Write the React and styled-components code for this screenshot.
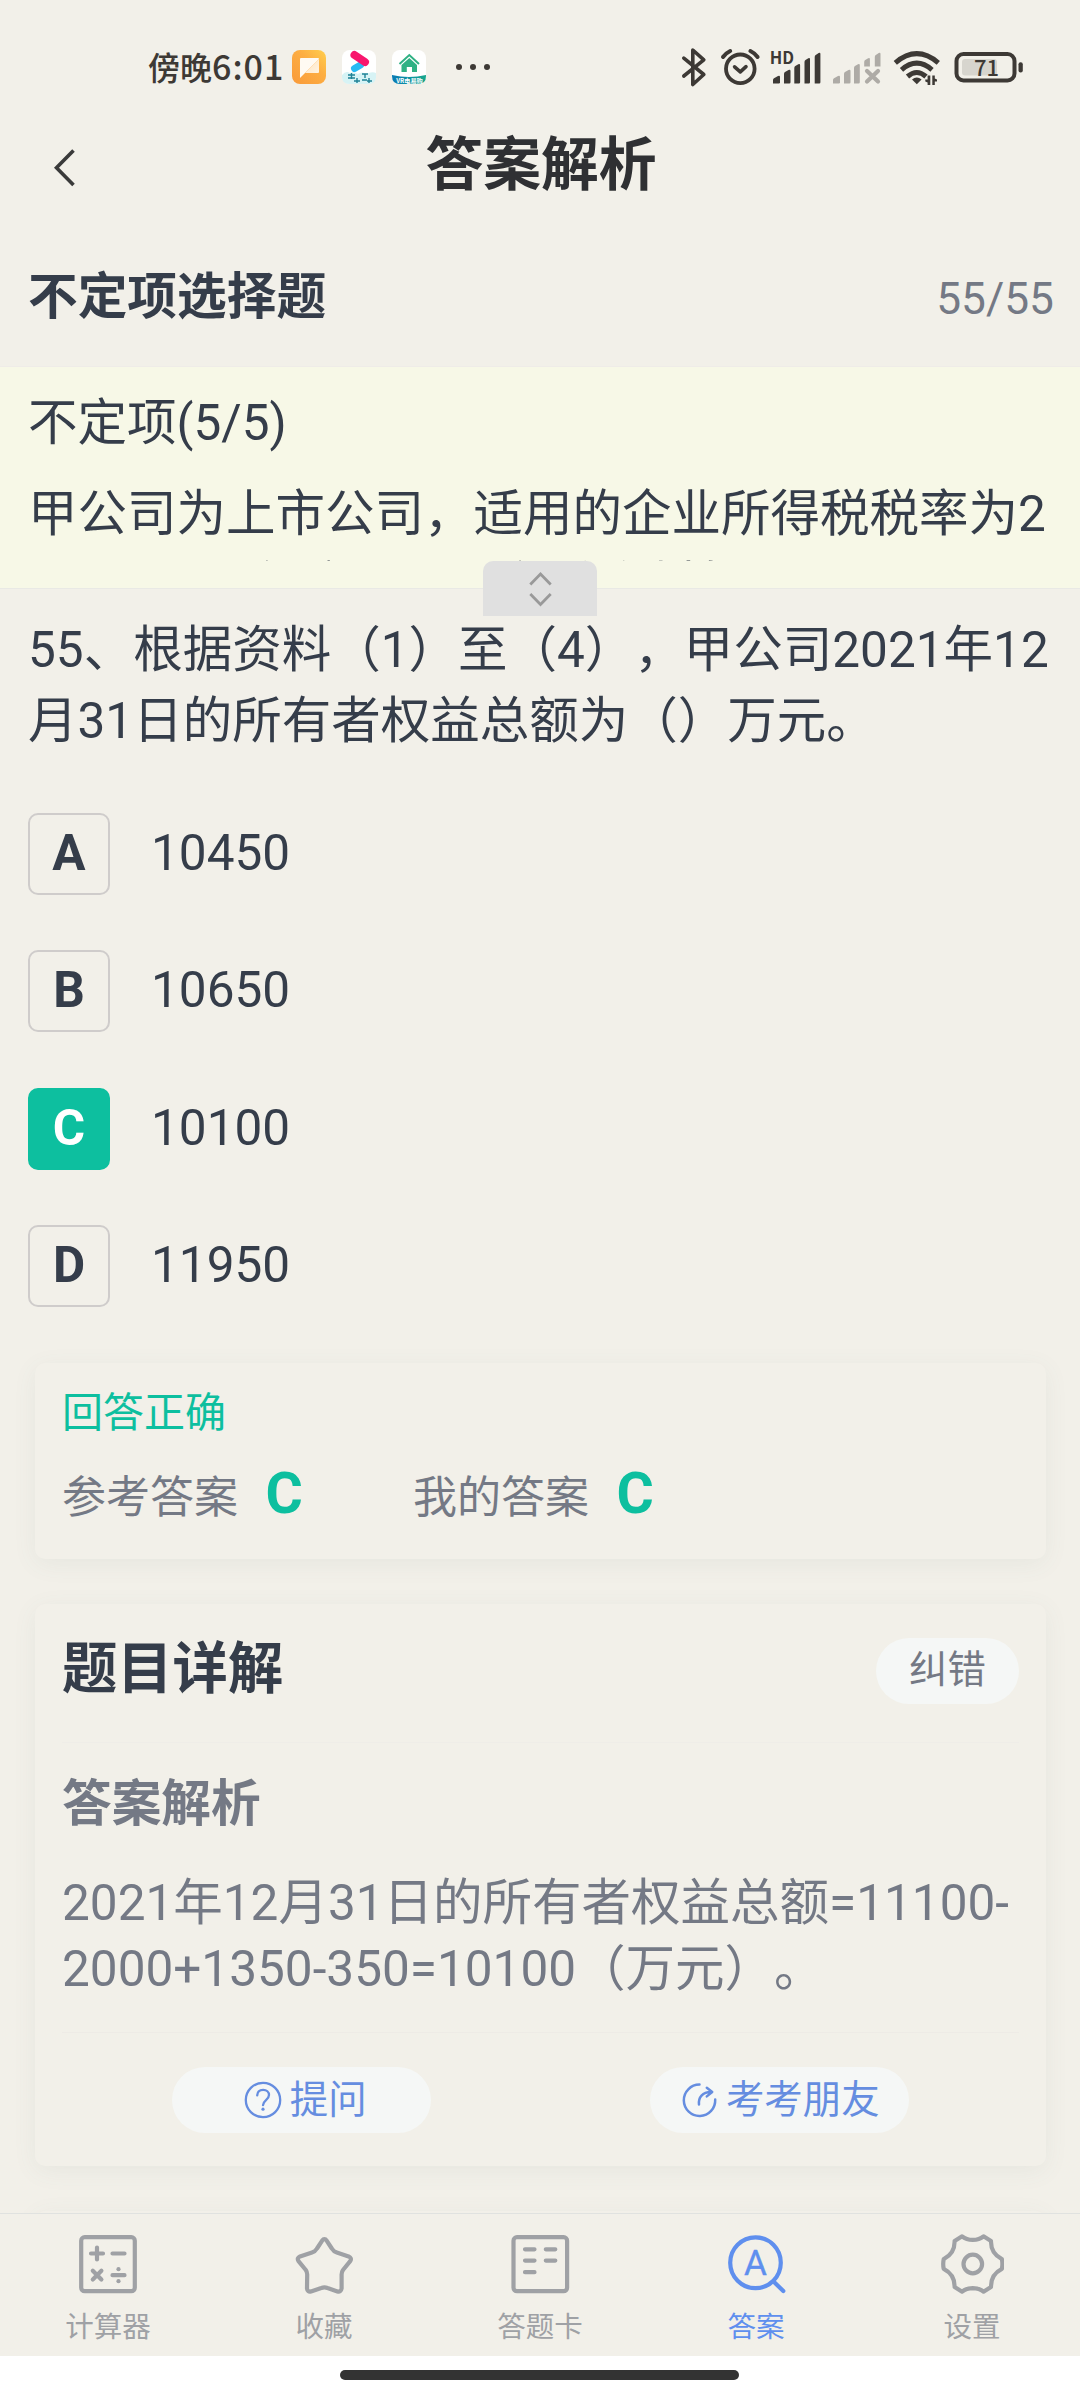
import React from "react";
import styled, { createGlobalStyle } from "styled-components";

const color = {
  page: "#f2f0e9",
  material: "#f7f8e7",
  ink: "#353d4a",
  title: "#2f3033",
  muted: "#747985",
  green: "#0dbf9f",
  blue: "#5f8fee",
  linkBlue: "#658de0",
  nav: "#9fa1a5",
  pill: "#f5f7f6",
  status: "#3d3935",
};

const Global = createGlobalStyle`
  * { box-sizing: border-box; }
  body {
    margin: 0;
    background: #fff;
    font-family: Roboto, "Noto Sans CJK SC", sans-serif;
    text-spacing-trim: space-all;
  }
`;

const Screen = styled.div`
  width: 1080px;
  height: 2400px;
  display: flex;
  flex-direction: column;
  background: ${color.page};
  color: ${color.ink};
  overflow: hidden;
`;

/* ---------- status bar ---------- */

const StatusBar = styled.div`
  flex: none;
  height: 110px;
  padding: 24px 0 0 148px;
  display: flex;
  align-items: center;
`;

const Clock = styled.div`
  flex: none;
  width: 144px;
  margin-top: -3px;
  font: 500 32px/40px "Noto Sans CJK SC", sans-serif;
  color: ${color.status};
  white-space: nowrap;
  span {
    font-size: 34px;
    letter-spacing: 1px;
  }
`;

const AppIcons = styled.div`
  flex: none;
  display: flex;
  gap: 16px;
`;

const Dots = styled.div`
  flex: none;
  display: flex;
  gap: 8px;
  margin-left: 30px;
  i {
    width: 6px;
    height: 6px;
    border-radius: 50%;
    background: ${color.status};
  }
`;

const StatusRight = styled.svg`
  flex: none;
  display: block;
  margin: -3px 0 0 190.5px;
`;

/* ---------- header ---------- */

const Header = styled.header`
  flex: none;
  height: 122px;
  padding: 15px 48px 0;
  display: grid;
  grid-template-columns: 60px 1fr 58px;
  align-items: start;
`;

const BackButton = styled.button`
  border: 0;
  padding: 23px 0 0 4px;
  background: none;
  text-align: left;
  line-height: 0;
`;

const HeaderTitle = styled.h1`
  margin: 0;
  font-size: 57.8px;
  line-height: 80px;
  font-weight: 700;
  text-align: center;
  color: ${color.title};
`;

const SectionRow = styled.div`
  flex: none;
  height: 135px;
  padding: 30px 26px 0 28px;
  display: flex;
  align-items: baseline;
  justify-content: space-between;
  border-bottom: 1px solid #efece8;
`;

const SectionTitle = styled.h2`
  margin: 0;
  font-size: 49.7px;
  line-height: 71px;
  font-weight: 700;
`;

const Progress = styled.span`
  font-size: 44.3px;
  line-height: 71px;
  color: ${color.muted};
`;

/* ---------- shared material ---------- */

const Material = styled.section`
  flex: none;
  position: relative;
  height: 222px;
  padding: 20.5px 0 0 28px;
  background: ${color.material};
  border-bottom: 1px solid #e9e9e5;
`;

const Paragraph = styled.p`
  margin: 0;
  font-size: 49.5px;
  line-height: ${(p) => p.$line || 71}px;
  color: ${(p) => (p.$muted ? color.muted : color.ink)};
  white-space: nowrap;
`;

const MaterialText = styled.div`
  margin-top: 20px;
  height: 82.5px;
  overflow: hidden;
  display: flex;
  flex-direction: column;
  gap: 1.5px;
  p {
    flex: none;
  }
`;

const Handle = styled.div`
  position: absolute;
  left: 483px;
  top: 194px;
  width: 114px;
  height: 55px;
  padding-top: 1px;
  border-radius: 10px 10px 0 0;
  background: #e0e0e0;
  display: flex;
  align-items: center;
  justify-content: center;
`;

/* ---------- question ---------- */

const Question = styled.section`
  flex: none;
  padding: 25.5px 0 0 28px;
`;

const Options = styled.ul`
  flex: none;
  list-style: none;
  margin: 56.5px 0 0;
  padding: 0 28px;
  display: flex;
  flex-direction: column;
  gap: 55.4px;
`;

const Option = styled.li`
  display: flex;
  align-items: center;
  gap: 41px;
  height: 82px;
  font-size: 49.5px;
  line-height: 76px;
`;

const OptionKey = styled.span`
  width: 82px;
  height: 82px;
  padding-bottom: 2px;
  display: flex;
  align-items: center;
  justify-content: center;
  border: 2px solid ${(p) => (p.$on ? color.green : "#cfcccb")};
  border-radius: 10px;
  background: ${(p) => (p.$on ? color.green : "transparent")};
  color: ${(p) => (p.$on ? "#fff" : color.ink)};
  font-weight: 700;
`;

const OptionText = styled.span`
  padding-bottom: 2px;
`;

/* ---------- cards ---------- */

const Card = styled.section`
  flex: none;
  width: 1011px;
  height: ${(p) => p.$height}px;
  margin: ${(p) => p.$top}px 0 0 35px;
  padding: ${(p) => p.$pad}px 27px 0;
  border-radius: 10px;
  background: ${color.page};
  box-shadow: 0 5px 24px rgba(80, 110, 120, 0.07);
`;

const Verdict = styled.div`
  font-size: 41px;
  line-height: 50px;
  color: ${color.green};
`;

const Answers = styled.div`
  display: flex;
  margin-top: 26px;
`;

const Answer = styled.div`
  width: 351px;
  display: flex;
  align-items: baseline;
  gap: 27.5px;
  font-size: 44px;
  line-height: 60px;
  color: ${color.muted};
  b {
    font-size: 57px;
    color: ${color.green};
  }
`;

const CardHead = styled.div`
  height: 105px;
  display: flex;
  align-items: flex-start;
  justify-content: space-between;
  border-bottom: 1px solid #efede8;
`;

const CardTitle = styled.h3`
  margin: -1.3px 0 0;
  font-size: 55.3px;
  line-height: 66px;
  font-weight: 700;
`;

const Pill = styled.button`
  width: ${(p) => p.$width}px;
  height: 66px;
  padding: 0 0 ${(p) => (p.$link ? 0 : 2)}px ${(p) => p.$inset || 0}px;
  border: 0;
  border-radius: 33px;
  background: ${color.pill};
  color: ${(p) => (p.$link ? color.linkBlue : color.muted)};
  font: 400 38.4px/60px Roboto, "Noto Sans CJK SC", sans-serif;
  display: flex;
  align-items: center;
  justify-content: center;
  gap: 8px;
`;

const SubTitle = styled.h4`
  margin: 27.5px 0 33.5px;
  font-size: 49.7px;
  line-height: 66px;
  font-weight: 700;
  color: ${color.muted};
`;

const Actions = styled.div`
  margin-top: 30px;
  padding-top: 34px;
  border-top: 1px solid #eeebe6;
  display: grid;
  grid-template-columns: 1fr 1fr;
  justify-items: center;
`;

const Content = styled.main`
  flex: none;
  height: 1846px;
  overflow: hidden;
  display: flex;
  flex-direction: column;
`;

/* ---------- bottom navigation ---------- */

const Nav = styled.nav`
  flex: none;
  height: 143px;
  border-top: 1px solid #e0e2e0;
  background: ${color.page};
  display: grid;
  grid-template-columns: repeat(5, 1fr);
`;

const NavItem = styled.a`
  padding-top: 18px;
  display: flex;
  flex-direction: column;
  align-items: center;
  gap: 15px;
  font-size: 28.5px;
  line-height: 34px;
  color: ${(p) => (p.$active ? color.blue : color.nav)};
`;

const HomeArea = styled.div`
  flex: 1;
  padding: 14px 1px 0 0;
  background: #fff;
`;

const HomeBar = styled.div`
  width: 399px;
  height: 10px;
  margin: 0 auto;
  border-radius: 5px;
  background: #333;
`;

const stroke = {
  fill: "none",
  stroke: "currentColor",
  strokeLinecap: "round",
  strokeLinejoin: "round",
};

const NavSvg = ({ children }) => (
  <svg width="64" height="64" viewBox="0 0 64 64" {...stroke} strokeWidth="4.2">
    {children}
  </svg>
);

const CalculatorIcon = () => (
  <NavSvg>
    <rect x="5.2" y="5.2" width="53.6" height="54" rx="3.5" />
    <path d="M15 21.5h12M21 15.5v12M36.5 21.5h12M16.8 38.8l8.6 8.6M25.4 38.8l-8.6 8.6M36.5 43.2h12" />
    <circle cx="42.5" cy="37.2" r="2.1" fill="currentColor" stroke="none" />
    <circle cx="42.5" cy="49.2" r="2.1" fill="currentColor" stroke="none" />
  </NavSvg>
);

const StarIcon = () => (
  <NavSvg>
    <path d="M30 8.800Q32.400 5.600 34.800 8.800L39.800 16.500Q41.600 19.500 44.800 20.500L56.600 24.400Q60.200 26 58.200 29.200L51 38Q49.600 40 49.600 42.500L49.600 56.500Q49 60.200 45.400 59.400L35.500 56Q32.400 54.800 29.300 56L19 59.400Q15.400 60.200 15 56.500L15.200 42.500Q15.200 40 13.800 38L6.500 29.200Q4.500 26 8 24.400L20 20.500Q23.200 19.500 25 16.500Z" />
  </NavSvg>
);

const SheetIcon = () => (
  <NavSvg>
    <rect x="5.500" y="5.2" width="53.6" height="54" rx="3.5" />
    <path d="M17 17.300h9.500M37.800 17.300h9.500M17 28.600h9.500M37.800 28.600h9.500M17 40.200h9.500" />
  </NavSvg>
);

const AnswerIcon = () => (
  <NavSvg>
    <ellipse cx="31.500" cy="30.800" rx="25.300" ry="25.400" />
    <path d="M49.500 49.500L59.300 59" />
    <text
      x="31.500"
      y="43.300"
      textAnchor="middle"
      fontFamily="Roboto, sans-serif"
      fontSize="35"
      fontWeight="400"
      fill="currentColor"
      stroke="currentColor"
      strokeWidth="0.4"
    >
      A
    </text>
  </NavSvg>
);

const GearIcon = () => (
  <NavSvg>
    <circle cx="32.800" cy="32" r="9.300" />
    <path d="M14.600 9L22.100 4.300Q26.300 7.800 32.800 7.900Q39.300 7.800 43.500 4.300L51 9Q50.600 21.500 61.900 27.200Q62.900 32 61.900 36.800Q50.600 42.500 51 55L43.500 59.700Q39.300 56.200 32.800 56.100Q26.300 56.200 22.100 59.700L14.600 55Q15 42.500 3.700 36.800Q2.700 32 3.700 27.200Q15 21.500 14.600 9Z" />
  </NavSvg>
);

const HelpIcon = () => (
  <svg width="38" height="38" viewBox="0 0 38 38" {...stroke} strokeWidth="2.3">
    <circle cx="19" cy="19" r="17.2" />
    <path d="M13.200 14.400c.2-3.600 2.500-5.500 5.900-5.500 3.500 0 5.900 2.100 5.900 5.100 0 4.900-6 5.200-6 10.200" />
    <circle cx="19" cy="28.200" r="1.600" fill="currentColor" stroke="none" />
  </svg>
);

const ShareIcon = () => (
  <svg width="38" height="38" viewBox="0 0 38 38" {...stroke} strokeWidth="2.5">
    <path d="M19.500 3.600A15.700 15.700 0 1 0 35.200 18.500" />
    <path d="M19 23.500c-.8-7 3.500-12.400 12-12.500M26.800 6.800l5.400 4.200-5.400 4.400" />
  </svg>
);

const StatusIcons = () => (
  <StatusRight width="364" height="52" viewBox="0 0 364 52">
    <g {...stroke} stroke={color.status} strokeWidth="3.6">
      <path d="M2.800 18.200L22.800 34.500L11.800 44.500V10L22.800 19.800L2.800 36" />
      <circle cx="59.300" cy="28.800" r="14.300" strokeWidth="3.800" />
      <path d="M53.600 26.800L59.300 31.800L65 26.600" />
      <path d="M42 17q3-4 7.200-6M76.600 17q-3-4-7.200-6" strokeWidth="4" />
    </g>
    <text
      x="88.800"
      y="24"
      fontFamily='"Noto Sans CJK SC", sans-serif'
      fontSize="16.500"
      fontWeight="700"
      fill={color.status}
    >
      HD
    </text>
    <g fill={color.status}>
      <path d="M92 43.500V40q0-1 1-1.700l4-2.300q2-.8 2 1V42.200q0 1.300-1.200 1.300Z" />
      <path d="M103 43.500V34q0-1.500 1-2l3.500-2q2-.8 2 1V42.200q0 1.300-1.200 1.300Z" />
      <path d="M113.300 43.500V28q0-1.500 1-2l3-1.800q1.800-.8 1.800 1V42.200q0 1.300-1.200 1.300Z" />
      <path d="M123.500 43.500V22q0-1.500 1-2l2.800-1.700q1.700-.8 1.700 1V42.200q0 1.300-1.200 1.300Z" />
      <path d="M133.700 43.500V17q0-1.500 1-2l3-2q1.700-.8 1.700 1V42.200q0 1.300-1.200 1.300Z" />
    </g>
    <g fill="#aeaba6">
      <path d="M152 43.500V40q0-1 1-1.700l4-2.300q2-.8 2 1V42.200q0 1.300-1.200 1.300Z" />
      <path d="M163 43.500V34q0-1.500 1-2l3.500-2q2-.8 2 1V42.200q0 1.300-1.200 1.300Z" />
      <path d="M173 43.500V28q0-1.500 1-2l3-1.800q1.800-.8 1.800 1V42.200q0 1.300-1.200 1.300Z" />
      <path d="M183.200 26.500V22q0-1.500 1-2l3-1.700q1.700-.8 1.700 1V26.500Z" />
      <path d="M193.800 26.500V17q0-1.500 1-2l3-2q1.700-.8 1.700 1V26.500Z" />
      <path
        d="M186 31l11 10.500M197 31l-11 10.500"
        stroke="#aeaba6"
        strokeWidth="4.200"
        strokeLinecap="round"
      />
    </g>
    <g fill="none" stroke={color.status} strokeWidth="5" strokeLinecap="butt">
      <path d="M214.300 22.800Q235.800 4.500 257.300 22.800" />
      <path d="M220.500 29.800Q235.800 16.500 251 29.800" />
      <path d="M226.500 36.500Q235.800 28.500 245 36.500" />
    </g>
    <path d="M235.800 44.200l-4.800-4.600q4.800-4 9.600 0Z" fill={color.status} />
    <g fill={color.status}>
      <path d="M249.300 35.500V45h-2.700v-2.500L244.300 41.500V39.500H246.600V35.500Z" />
      <path d="M251.300 35.500h2.500V38.500L256 39.500V41.500h-2.200V45H251.300Z" />
    </g>
    <g>
      <rect
        x="275.500"
        y="14"
        width="58"
        height="26.500"
        rx="7"
        fill="none"
        stroke={color.status}
        strokeWidth="4"
      />
      <rect x="281" y="19" width="35" height="16.500" rx="3" fill="#d7d5ce" />
      <rect x="337.500" y="22.300" width="4.300" height="10.200" rx="2" fill={color.status} />
      <text
        x="305.500"
        y="35.500"
        textAnchor="middle"
        fontFamily='"Noto Sans CJK SC", sans-serif'
        fontSize="22"
        fontWeight="500"
        fill={color.status}
      >
        71
      </text>
    </g>
  </StatusRight>
);

const NoteAppIcon = () => (
  <svg width="34" height="34" viewBox="0 0 34 34">
    <defs>
      <linearGradient id="note" x1="0" y1="1" x2="1" y2="0">
        <stop offset="0" stopColor="#f99a3a" />
        <stop offset=".6" stopColor="#fdae42" />
        <stop offset="1" stopColor="#ffcf4d" />
      </linearGradient>
      <linearGradient id="fold" x1="0" y1="0" x2="1" y2="1">
        <stop offset="0" stopColor="#ffe2bd" />
        <stop offset="1" stopColor="#fff4e2" />
      </linearGradient>
    </defs>
    <rect width="34" height="34" rx="8" fill="url(#note)" />
    <path d="M8 9q0-1 1-1h17q1 0 1 1L8 28Z" fill="#fffaf2" />
    <path d="M27 9v13q0 1-1 1H13Z" fill="url(#fold)" />
  </svg>
);

const PlayAppIcon = () => (
  <svg width="34" height="34" viewBox="0 0 34 34">
    <rect width="34" height="34" rx="8" fill="#fff" />
    <path d="M12.500 18.500l6-3.500" stroke="#29baf3" strokeWidth="7" strokeLinecap="round" />
    <path d="M12.500 5l10.500 7" stroke="#f8176e" strokeWidth="8" strokeLinecap="round" />
    <path d="M0 25q4-5 8-2 4-2 8 1 4-3 8 0 6-3 10-1v5q-1 6-8 6H8q-7 0-8-6Z" fill="#d7f3f5" />
    <path
      d="M6 25h7M9.500 23v6M6 28h7M20 24h6M23 24v4M12 31h6M15 28v5M20 30h5M27 28v5M25 31h5"
      stroke="#1f8296"
      strokeWidth="1.400"
      fill="none"
    />
  </svg>
);

const HouseAppIcon = () => (
  <svg width="34" height="34" viewBox="0 0 34 34">
    <defs>
      <linearGradient id="band" x1="0" x2="1">
        <stop offset="0" stopColor="#0a7bb5" />
        <stop offset="1" stopColor="#16a78c" />
      </linearGradient>
    </defs>
    <rect width="34" height="34" rx="8" fill="#fff" />
    <path d="M7.500 14L17.300 5L27 14" fill="none" stroke="#2fb184" strokeWidth="2" />
    <path d="M9.500 15L17.300 8L25 15V22H20V17H14.800V22H9.500Z" fill="#2fb184" />
    <path d="M0 25Q17 29 34 25V26q0 8-8 8H8q-8 0-8-8Z" fill="url(#band)" />
    <text
      x="17.500"
      y="33"
      textAnchor="middle"
      fontFamily='"Noto Sans CJK SC", sans-serif'
      fontSize="6.200"
      fontWeight="700"
      fill="#fff"
    >
      VR电易购
    </text>
  </svg>
);

const options = [
  ["A", "10450"],
  ["B", "10650"],
  ["C", "10100"],
  ["D", "11950"],
];

const tabs = [
  ["计算器", CalculatorIcon],
  ["收藏", StarIcon],
  ["答题卡", SheetIcon],
  ["答案", AnswerIcon],
  ["设置", GearIcon],
];

export default function App() {
  return (
    <Screen>
      <Global />
      <StatusBar>
        <Clock>
          傍晚<span>6:01</span>
        </Clock>
        <AppIcons>
          <NoteAppIcon />
          <PlayAppIcon />
          <HouseAppIcon />
        </AppIcons>
        <Dots>
          <i />
          <i />
          <i />
        </Dots>
        <StatusIcons />
      </StatusBar>

      <Header>
        <BackButton aria-label="返回">
          <svg width="24" height="40" viewBox="0 0 24 40">
            <path
              d="M21.500 2.500L4.500 19.800L21.500 37"
              fill="none"
              stroke="#3a3a3a"
              strokeWidth="3.600"
            />
          </svg>
        </BackButton>
        <HeaderTitle>答案解析</HeaderTitle>
      </Header>

      <SectionRow>
        <SectionTitle>不定项选择题</SectionTitle>
        <Progress>55/55</Progress>
      </SectionRow>

      <Content>
        <Material>
          <Paragraph>不定项(5/5)</Paragraph>
          <MaterialText>
            <Paragraph>甲公司为上市公司，适用的企业所得税税率为2</Paragraph>
            <Paragraph>5%，2021年度甲公司有关资料如下:（1）</Paragraph>
          </MaterialText>
          <Handle>
            <svg width="26" height="36" viewBox="0 0 26 36">
              <path
                d="M3.300 13.500L13.500 3L23.700 13.500M3.300 23L13.500 33.500L23.700 23"
                fill="none"
                stroke="#999"
                strokeWidth="2.800"
              />
            </svg>
          </Handle>
        </Material>

        <Question>
          <Paragraph>55、根据资料（1）至（4），甲公司2021年12</Paragraph>
          <Paragraph>月31日的所有者权益总额为（）万元。</Paragraph>
        </Question>

        <Options>
          {options.map(([key, text]) => (
            <Option key={key}>
              <OptionKey $on={key === "C"}>{key}</OptionKey>
              <OptionText>{text}</OptionText>
            </Option>
          ))}
        </Options>

        <Card $top={56.3} $height={196} $pad={25}>
          <Verdict>回答正确</Verdict>
          <Answers>
            <Answer>
              参考答案<b>C</b>
            </Answer>
            <Answer>
              我的答案<b>C</b>
            </Answer>
          </Answers>
        </Card>

        <Card $top={45} $height={562} $pad={34}>
          <CardHead>
            <CardTitle>题目详解</CardTitle>
            <Pill $width={143}>纠错</Pill>
          </CardHead>
          <SubTitle>答案解析</SubTitle>
          <Paragraph $line={66} $muted>
            2021年12月31日的所有者权益总额=11100-
          </Paragraph>
          <Paragraph $line={66} $muted>
            2000+1350-350=10100（万元）。
          </Paragraph>
          <Actions>
            <Pill $width={259} $inset={8} $link>
              <HelpIcon />
              提问
            </Pill>
            <Pill $width={259} $link>
              <ShareIcon />
              考考朋友
            </Pill>
          </Actions>
        </Card>

        <Card $top={45} $height={120} $pad={0} />
      </Content>

      <Nav>
        {tabs.map(([label, Icon]) => (
          <NavItem key={label} $active={label === "答案"}>
            <Icon />
            {label}
          </NavItem>
        ))}
      </Nav>
      <HomeArea>
        <HomeBar />
      </HomeArea>
    </Screen>
  );
}
